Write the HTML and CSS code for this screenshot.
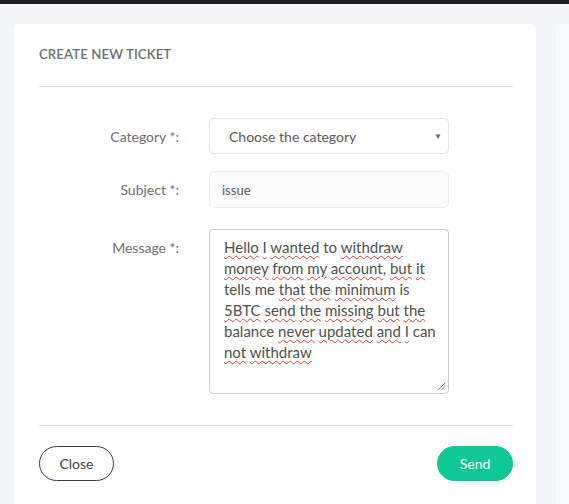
FILE: index.html
```html
<!DOCTYPE html>
<html>
<head>
<meta charset="utf-8">
<link rel="stylesheet" href="styles.css">
</head>
<body>
<div class="topbar"></div>
<div class="content">
  <div class="card">
    <div class="card-header">CREATE NEW TICKET</div>
    <div class="form">
      <label class="label center">Category *:</label>
      <div class="select">
        <span>Choose the category</span>
        <span class="caret">&#9660;</span>
      </div>
      <label class="label center">Subject *:</label>
      <div class="input">issue</div>
      <label class="label top">Message *:</label>
      <div class="textarea">
        <span class="sp">Hello</span> <span class="sp">I</span> <span class="sp">wanted</span> to <span class="sp">withdraw</span><br>
        <span class="sp">money</span> <span class="sp">from</span> <span class="sp">my</span> <span class="sp">account</span>, <span class="sp">but</span> <span class="sp">it</span><br>
        tells me <span class="sp">that</span> <span class="sp">the</span> <span class="sp">minimum</span> is<br>
        <span class="sp">5BTC</span> <span class="sp">send</span> <span class="sp">the</span> <span class="sp">missing</span> <span class="sp">but</span> <span class="sp">the</span><br>
        balance <span class="sp">never</span> <span class="sp">updated</span> <span class="sp">and</span> <span class="sp">I</span> can<br>
        <span class="sp">not</span> <span class="sp">withdraw</span>
        <svg class="grip" width="9" height="9" viewBox="0 0 9 9"><path d="M8 1 L1 8 M8 4.5 L4.5 8" stroke="#888" stroke-width="1"/></svg>
      </div>
    </div>
    <div class="footer">
      <button class="btn btn-close">Close</button>
      <button class="btn btn-send">Send</button>
    </div>
  </div>
  <div class="card side"></div>
</div>
</body>
</html>
```
FILE: styles.css
```css
* { box-sizing: border-box; }
html, body { margin: 0; height: 100%; }
body {
  background: #f3f4f8;
  font-family: "Lato", "Noto Sans", sans-serif;
  overflow: hidden;
}
.topbar { height: 4px; background: #1f1f1f; }
.content {
  display: flex;
  gap: 20px;
  padding: 20px 0 0 14px;
}
.card {
  width: 522px;
  flex: none;
  background: #fff;
  border-radius: 4px 4px 0 0;
  padding: 0 23px 0 25px;
  height: 500px;
}
.card.side { width: 40px; background: #f8f9fb; padding: 0; }
.card-header {
  padding: 22px 0 0 0;
  height: 63px;
  border-bottom: 1px solid #d9dde2;
  font-size: 13.2px;
  font-weight: 600;
  color: #6a6f75;
  letter-spacing: 0.1px;
}
.form {
  display: grid;
  grid-template-columns: 140px 240px;
  column-gap: 30px;
  row-gap: 17px;
  padding: 31px 0 31px 0;
  border-bottom: 1px solid #d9dde2;
}
.label {
  text-align: right;
  font-size: 14px;
  color: #707070;
}
.label.center { align-self: center; }
.label.top { padding-top: 10px; margin-top: 4px; }
.select {
  height: 36px;
  border: 1px solid #e3e6ea;
  border-radius: 5px;
  display: flex;
  align-items: center;
  justify-content: space-between;
  padding: 0 6px 0 19px;
  font-size: 14px;
  color: #5a5a5a;
}
.caret { font-size: 8px; color: #666; }
.input {
  height: 37px;
  border: 1px solid #e9ebee;
  background: #fafafa;
  border-radius: 5px;
  display: flex;
  align-items: center;
  padding: 0 12px;
  font-size: 13px;
  color: #5a5a5a;
}
.textarea {
  position: relative;
  margin-top: 4px;
  height: 165px;
  border: 1px solid #c8cbcf;
  border-radius: 4px;
  padding: 7px 8px 0 14px;
  font-size: 15px;
  line-height: 21px;
  color: #505050;
}
.sp {
  text-decoration: underline wavy #e0403a;
  text-decoration-thickness: 1px;
  text-underline-offset: 2px;
}
.grip { position: absolute; right: 2px; bottom: 2px; }
.footer {
  display: flex;
  justify-content: space-between;
  padding-top: 20px;
}
.btn {
  height: 35px;
  border-radius: 18px;
  font-family: inherit;
  font-size: 14px;
  padding: 0;
}
.btn-close {
  width: 75px;
  background: #fff;
  border: 1px solid #3a3a3a;
  color: #444;
}
.btn-send {
  width: 76px;
  background: #10c894;
  border: 1px solid #10c894;
  color: #fff;
}
```
